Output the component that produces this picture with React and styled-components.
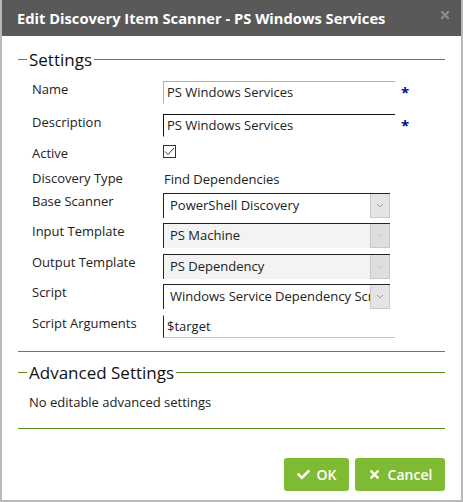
import React from 'react';
import styled, { createGlobalStyle } from 'styled-components';
import { FaCheck, FaTimes } from 'react-icons/fa';

const GlobalStyle = createGlobalStyle`
  html, body {
    margin: 0;
    padding: 0;
    background: #b9b9b9;
    font-family: 'Open Sans', 'Noto Sans', sans-serif;
  }
`;

const Dialog = styled.div`
  margin-left: 2px;
  width: 459px;
  height: 500px;
  background: #fff;
  display: flex;
  flex-direction: column;
`;

const Header = styled.div`
  height: 36px;
  background: #595959;
  display: flex;
  align-items: center;
  justify-content: space-between;
  padding: 0 10px 0 15px;
  color: #fff;
  font-weight: 700;
  font-size: 14.7px;
`;

const Close = styled.span`
  color: #8c8c8c;
  font-size: 12px;
  display: flex;
  margin-top: -6px;
`;

const Content = styled.div`
  padding: 0 16px;
  display: flex;
  flex-direction: column;
`;

const SectionTitle = styled.div`
  display: flex;
  align-items: center;
  gap: 2px;
  height: 22px;
  margin-top: ${(p) => p.$top}px;
  font-size: 17px;
  color: #111;
  &::before {
    content: '';
    width: 9px;
    height: 1px;
    background: #5f8a1c;
  }
  &::after {
    content: '';
    flex: 1;
    height: 1px;
    background: #5f8a1c;
  }
`;

const Divider = styled.div`
  height: 1px;
  background: #5f8a1c;
  margin-top: ${(p) => p.$top}px;
`;

const Form = styled.div`
  margin-top: 11px;
  display: flex;
  flex-direction: column;
`;

const Row = styled.div`
  display: grid;
  grid-template-columns: 131px 232px 1fr;
  align-items: start;
  height: ${(p) => p.$h}px;
  padding-left: 14px;
  font-size: 13px;
  color: #222;
`;

const Label = styled.div`
  line-height: 17px;
`;

const TextInput = styled.div`
  height: 23px;
  box-sizing: border-box;
  border-left: 1px solid ${(p) => p.$border};
  border-top: 1px solid ${(p) => (p.$noTop ? 'transparent' : p.$border)};
  border-bottom: 1px solid ${(p) => (p.$bottom ? '#c4c4c4' : 'transparent')};
  padding: 0 3px;
  line-height: 21px;
`;

const Required = styled.span`
  color: #0a0a8c;
  font-weight: 700;
  font-size: 15px;
  padding-left: 6px;
  line-height: 22px;
`;

const Check = styled.div`
  width: 13px;
  height: 13px;
  box-sizing: border-box;
  border: 1px solid #333;
  display: flex;
  align-items: center;
  justify-content: center;
`;

const PlainValue = styled.div`
  line-height: 18px;
  padding-left: 1px;
`;

const Select = styled.div`
  width: 227px;
  height: 25px;
  box-sizing: border-box;
  display: flex;
  background: ${(p) => (p.$disabled ? '#f3f3f3' : '#fff')};
  border-left: 1px solid #222;
  border-top: 1px solid #222;
`;

const SelectText = styled.div`
  flex: 1;
  padding-left: 6px;
  line-height: 23px;
  white-space: nowrap;
  overflow: hidden;
`;

const Arrow = styled.div`
  width: 18px;
  background: ${(p) => (p.$disabled ? '#dedede' : '#e4e4e4')};
  border: 1px solid #c9c9c9;
  border-top: 0;
  display: flex;
  align-items: center;
  justify-content: center;
  color: ${(p) => (p.$disabled ? '#c4c4c4' : '#9a9a9a')};
`;

const Note = styled.div`
  margin-top: 10px;
  padding-left: 11px;
  font-size: 13px;
  line-height: 18px;
  color: #222;
`;

const Footer = styled.div`
  margin-top: 29px;
  display: flex;
  justify-content: flex-end;
  gap: 6px;
`;

const Button = styled.button`
  height: 33px;
  width: ${(p) => p.$w}px;
  border: 0;
  border-radius: 3px;
  background: #7fba33;
  color: #fff;
  font-family: 'Open Sans', sans-serif;
  font-size: 14px;
  font-weight: 600;
  display: flex;
  align-items: center;
  justify-content: center;
  gap: 7px;
  padding: 0;
`;

const Chevron = () => (
  <svg width="8" height="5" viewBox="0 0 8 5">
    <path d="M1 1 L4 4 L7 1" fill="none" stroke="currentColor" strokeWidth="1" />
  </svg>
);

const SelectField = ({ value, disabled }) => (
  <Select $disabled={disabled}>
    <SelectText>{value}</SelectText>
    <Arrow $disabled={disabled}>
      <Chevron />
    </Arrow>
  </Select>
);

export default function App() {
  return (
    <>
      <GlobalStyle />
      <Dialog>
        <Header>
          <span>Edit Discovery Item Scanner - PS Windows Services</span>
          <Close>
            <FaTimes />
          </Close>
        </Header>
        <Content>
          <SectionTitle $top={12}>Settings</SectionTitle>
          <Form>
            <Row $h={33}>
              <Label>Name</Label>
              <TextInput $border="#6ec6ea">PS Windows Services</TextInput>
              <Required>*</Required>
            </Row>
            <Row $h={31}>
              <Label>Description</Label>
              <TextInput $border="#111">PS Windows Services</TextInput>
              <Required>*</Required>
            </Row>
            <Row $h={25}>
              <Label>Active</Label>
              <Check>
                <svg width="11" height="9" viewBox="0 0 11 9">
                  <path d="M1 4.5 L4 7.5 L10 1" fill="none" stroke="#333" strokeWidth="1" />
                </svg>
              </Check>
            </Row>
            <Row $h={23}>
              <Label>Discovery Type</Label>
              <PlainValue>Find Dependencies</PlainValue>
            </Row>
            <Row $h={30}>
              <Label>Base Scanner</Label>
              <SelectField value="PowerShell Discovery" />
            </Row>
            <Row $h={31}>
              <Label>Input Template</Label>
              <SelectField value="PS Machine" disabled />
            </Row>
            <Row $h={30}>
              <Label>Output Template</Label>
              <SelectField value="PS Dependency" disabled />
            </Row>
            <Row $h={31}>
              <Label>Script</Label>
              <SelectField value="Windows Service Dependency Script" />
            </Row>
            <Row $h={23}>
              <Label>Script Arguments</Label>
              <TextInput $border="#222" $noTop $bottom>
                $target
              </TextInput>
            </Row>
          </Form>
          <Divider $top={13} />
          <SectionTitle $top={9}>Advanced Settings</SectionTitle>
          <Note>No editable advanced settings</Note>
          <Divider $top={17} />
          <Footer>
            <Button $w={65}>
              <FaCheck size={13} />
              OK
            </Button>
            <Button $w={90}>
              <FaTimes size={13} />
              Cancel
            </Button>
          </Footer>
        </Content>
      </Dialog>
    </>
  );
}
